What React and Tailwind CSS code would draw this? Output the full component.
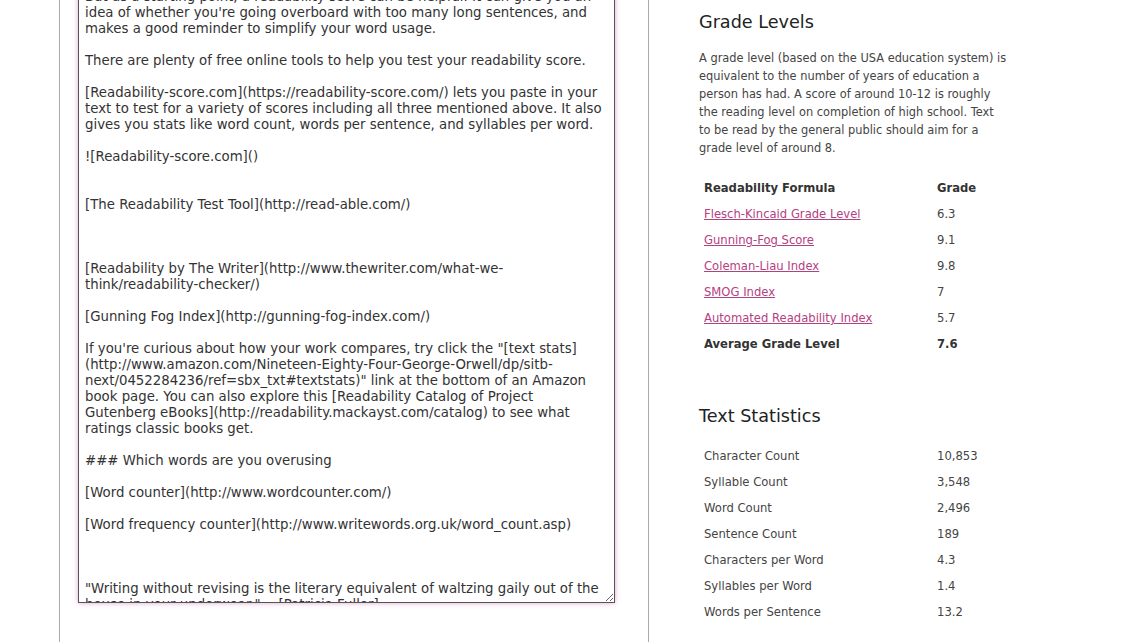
import React from 'react'

const draft = `But as a starting point, a readability score can be helpful. It can give you an
idea of whether you're going overboard with too many long sentences, and
makes a good reminder to simplify your word usage.

There are plenty of free online tools to help you test your readability score.

[Readability-score.com](https://readability-score.com/) lets you paste in your
text to test for a variety of scores including all three mentioned above. It also
gives you stats like word count, words per sentence, and syllables per word.

![Readability-score.com]()


[The Readability Test Tool](http://read-able.com/)



[Readability by The Writer](http://www.thewriter.com/what-we-
think/readability-checker/)

[Gunning Fog Index](http://gunning-fog-index.com/)

If you're curious about how your work compares, try click the "[text stats]
(http://www.amazon.com/Nineteen-Eighty-Four-George-Orwell/dp/sitb-
next/0452284236/ref=sbx_txt#textstats)" link at the bottom of an Amazon
book page. You can also explore this [Readability Catalog of Project
Gutenberg eBooks](http://readability.mackayst.com/catalog) to see what
ratings classic books get.

### Which words are you overusing

[Word counter](http://www.wordcounter.com/)

[Word frequency counter](http://www.writewords.org.uk/word_count.asp)



"Writing without revising is the literary equivalent of waltzing gaily out of the
house in your underwear." -- [Patricia Fuller]`

const grades = [
  { name: 'Flesch-Kincaid Grade Level', value: '6.3' },
  { name: 'Gunning-Fog Score', value: '9.1' },
  { name: 'Coleman-Liau Index', value: '9.8' },
  { name: 'SMOG Index', value: '7' },
  { name: 'Automated Readability Index', value: '5.7' },
]

const stats = [
  { label: 'Character Count', value: '10,853' },
  { label: 'Syllable Count', value: '3,548' },
  { label: 'Word Count', value: '2,496' },
  { label: 'Sentence Count', value: '189' },
  { label: 'Characters per Word', value: '4.3' },
  { label: 'Syllables per Word', value: '1.4' },
  { label: 'Words per Sentence', value: '13.2' },
]

const intro = [
  'A grade level (based on the USA education system) is',
  'equivalent to the number of years of education a',
  'person has had. A score of around 10-12 is roughly',
  'the reading level on completion of high school. Text',
  'to be read by the general public should aim for a',
  'grade level of around 8.',
]

export default function App() {
  return (
    <div className="flex h-[642px] overflow-hidden bg-white font-['DejaVu_Sans',sans-serif]">
      {/* editor column */}
      <div className="ml-[59px] h-full w-[590px] shrink-0 border-x border-[#aaaaaa]">
        <textarea
          readOnly
          wrap="off"
          value={draft}
          className="ml-[18px] -mt-[18px] block h-[621px] w-[537px] resize overflow-hidden whitespace-pre border border-[#555555] bg-white px-[6px] pt-[6px] text-[13.3px] leading-[16px] text-[#333333] shadow-[0_0_5px_rgba(200,90,170,0.55)] outline-none"
        />
      </div>

      {/* results column */}
      <div className="ml-[50px] w-[330px] text-[#444444]">
        <h2 className="mt-[8px] text-[17.6px] leading-[28px] text-[#222222]">Grade Levels</h2>
        <p className="mt-[13px] text-[11.4px] leading-[18px]">
          {intro.map((line) => (
            <span key={line} className="block whitespace-nowrap">{line}</span>
          ))}
        </p>

        <table className="mt-[19px] w-[300px] text-[11.6px]">
          <thead>
            <tr className="h-[26px]">
              <th className="w-[233px] px-[5px] text-left font-bold text-[#333333]">Readability Formula</th>
              <th className="px-[5px] text-left font-bold text-[#333333]">Grade</th>
            </tr>
          </thead>
          <tbody>
            {grades.map((g) => (
              <tr key={g.name} className="h-[26px]">
                <td className="px-[5px]">
                  <a href="#" className="text-[#b5407f] underline">{g.name}</a>
                </td>
                <td className="px-[5px]">{g.value}</td>
              </tr>
            ))}
            <tr className="h-[26px] font-bold text-[#333333]">
              <td className="px-[5px]">Average Grade Level</td>
              <td className="px-[5px]">7.6</td>
            </tr>
          </tbody>
        </table>

        <h2 className="mt-[44px] text-[17.6px] leading-[28px] text-[#222222]">Text Statistics</h2>
        <table className="mt-[14px] w-[300px] text-[11.6px]">
          <tbody>
            {stats.map((s) => (
              <tr key={s.label} className="h-[26px]">
                <td className="w-[233px] px-[5px]">{s.label}</td>
                <td className="px-[5px]">{s.value}</td>
              </tr>
            ))}
          </tbody>
        </table>
      </div>
    </div>
  )
}
